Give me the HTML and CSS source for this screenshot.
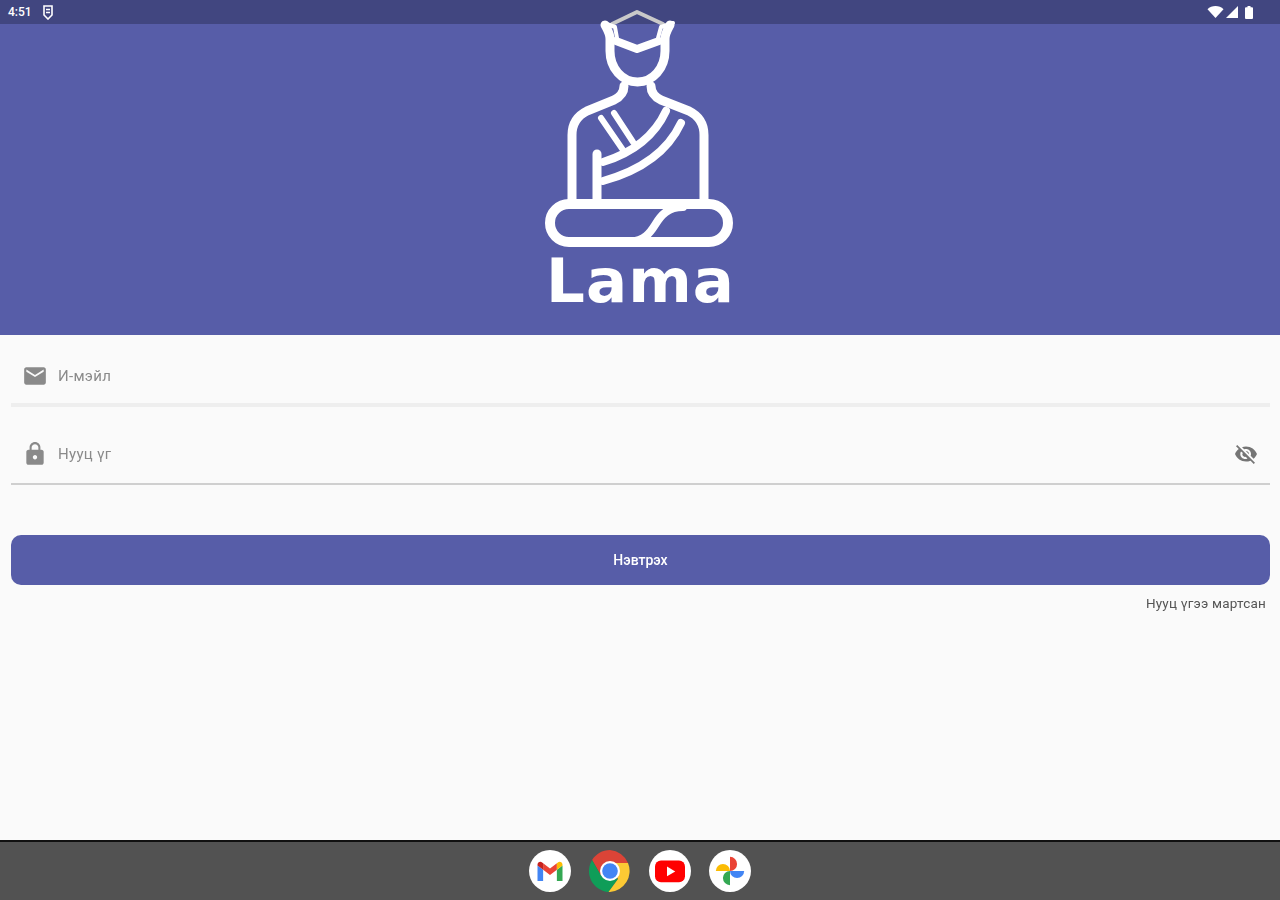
FILE: index.html
```html
<!DOCTYPE html>
<html lang="mn">
<head>
    <meta charset="UTF-8">
    <meta name="viewport" content="width=device-width, initial-scale=1.0">
    <title>Lama</title>
    <link rel="stylesheet" href="styles.css">
</head>
<body>
    <div class="screen">
        <div class="status-bar">
            <div class="status-left">
                <span class="time">4:51</span>
                <svg class="status-sim" viewBox="0 0 10 15" width="10" height="15">
                    <path fill="none" stroke="#fff" stroke-width="1.6" d="M1 1h8v9l-4 4-4-4z"/>
                    <path fill="none" stroke="#fff" stroke-width="1.400" d="M3 4.500h4M3 7.500h4"/>
                </svg>
            </div>
            <div class="status-right">
                <svg viewBox="0 0 16 12" width="17" height="12"><path fill="#fff" d="M0 3.200C2 1.200 5 0 8 0s6 1.200 8 3.200L8 12z"/></svg>
                <svg viewBox="0 0 12 12" width="12" height="12"><path fill="#fff" d="M12 0v12H0z"/></svg>
                <svg class="status-battery" viewBox="0 0 8 13" width="8" height="13"><path fill="#fff" d="M2.500 0h3v1.200H7a1 1 0 0 1 1 1V12a1 1 0 0 1-1 1H1a1 1 0 0 1-1-1V2.200a1 1 0 0 1 1-1h1.500z"/></svg>
            </div>
        </div>

        <header class="banner"></header>

        <!-- logo runs over the status bar -->
        <div class="logo">
            <svg class="logo-mark" viewBox="0 0 240 255" width="240" height="255">
                <g fill="none" stroke="#fff" stroke-linecap="round" stroke-linejoin="round">
                    <path class="cap-top" stroke-width="4" d="M92 24 117 12 143 24"/>
                    <path stroke-width="4" d="M84 23 95 27 97 38M153 23 141 27 138 38"/>
                    <path stroke-width="8" d="M96 41 117 49 139 41"/>
                    <path stroke-width="9" d="M85 25c2 4 5 8 5 14v12c0 17 12 31 27.500 31S145 68 145 51V39c0-6 3-10 5-14"/>
                    <path stroke-width="9" d="M104 86c0 7-4 11-10 14l-27 11c-10 5-15 13-15 24v66M131 86c0 7 4 11 10 14l28 11c10 5 15 13 15 24v66"/>
                    <path stroke-width="6" d="M81 118l22 32M94 113l19 29"/>
                    <path stroke-width="8" d="M146 111c-12 26-34 42-63 51M161 123c-14 30-42 48-78 58"/>
                    <path stroke-width="9" d="M77 154v48"/>
                    <rect stroke-width="10" x="30" y="204" width="178" height="38" rx="19"/>
                    <path stroke-width="8" d="M163 207c-15 0-22 8-28 18-5 8-10 15-25 17"/>
                </g>
            </svg>
            <div class="logo-name">Lama</div>
        </div>

        <main class="form">
            <div class="field field-email">
                <svg class="field-icon" viewBox="0 0 24 24" width="26" height="26"><path d="M20 4H4c-1.100 0-2 .9-2 2v12c0 1.100.9 2 2 2h16c1.100 0 2-.9 2-2V6c0-1.100-.9-2-2-2zm0 4-8 5-8-5V6l8 5 8-5v2z"/></svg>
                <span class="field-label">И-мэйл</span>
            </div>
            <div class="field field-password">
                <svg class="field-icon" viewBox="0 0 24 24" width="26" height="26"><path d="M18 8h-1V6c0-2.760-2.240-5-5-5S7 3.240 7 6v2H6c-1.100 0-2 .9-2 2v10c0 1.100.9 2 2 2h12c1.100 0 2-.9 2-2V10c0-1.100-.9-2-2-2zm-6 9c-1.100 0-2-.9-2-2s.9-2 2-2 2 .9 2 2-.9 2-2 2zm3.100-9H8.900V6c0-1.710 1.390-3.100 3.100-3.100s3.100 1.390 3.100 3.100v2z"/></svg>
                <span class="field-label">Нууц үг</span>
                <svg class="eye-icon" viewBox="0 0 24 24" width="24" height="24"><path d="M12 7c2.760 0 5 2.240 5 5 0 .65-.13 1.260-.36 1.830l2.920 2.920c1.510-1.260 2.700-2.890 3.430-4.750-1.730-4.390-6-7.500-11-7.500-1.400 0-2.740.25-3.980.7l2.160 2.160C10.740 7.130 11.350 7 12 7zM2 4.270l2.280 2.280.46.460C3.080 8.300 1.780 10.020 1 12c1.730 4.390 6 7.500 11 7.500 1.550 0 3.030-.3 4.380-.84l.42.420L19.730 22 21 20.730 3.270 3 2 4.270zM7.530 9.800l1.550 1.550c-.05.21-.8.430-.8.650 0 1.660 1.340 3 3 3 .22 0 .44-.3.650-.08l1.550 1.550c-.67.330-1.410.53-2.200.53-2.760 0-5-2.240-5-5 0-.79.200-1.530.53-2.200zm4.310-.78 3.150 3.150.02-.16c0-1.660-1.340-3-3-3l-.17.010z"/></svg>
            </div>
            <button class="login-button">Нэвтрэх</button>
            <a class="forgot-link">Нууц үгээ мартсан</a>
        </main>

        <footer class="dock">
            <div class="dock-app">
                <svg viewBox="0 0 24 24" width="30" height="30">
                    <path fill="#4285f4" d="M2 20h4.500V11L2 7.500z"/>
                    <path fill="#34a853" d="M17.500 20H22V7.500L17.500 11z"/>
                    <path fill="#ea4335" d="M6.500 5.800 12 10l5.500-4.200V11L12 15.200 6.500 11z"/>
                    <path fill="#fbbc04" d="M17.500 5.800 18.300 5.200C19.800 4 22 5 22 7v.5L17.500 11z"/>
                    <path fill="#c5221f" d="M2 7.500V7C2 5 4.200 4 5.700 5.200l.8.600V11z"/>
                </svg>
            </div>
            <div class="dock-app dock-chrome">
                <svg viewBox="0 0 42 42" width="42" height="42">
                    <path fill="#db4437" d="M21 0C13.400 0 6.800 4 3.100 10l8.900 15.500L21 13h18A21 21 0 0 0 21 0z"/>
                    <path fill="#0f9d58" d="M3.100 10A21 21 0 0 0 19.500 42l9.500-13-17-3.500z"/>
                    <path fill="#fcc934" d="M39 13H21l8 16-9.500 13H21A21 21 0 0 0 39 13z"/>
                    <circle cx="21" cy="21" r="10" fill="#fff"/>
                    <circle cx="21" cy="21" r="7.800" fill="#4285f4"/>
                </svg>
            </div>
            <div class="dock-app">
                <svg viewBox="0 0 24 24" width="36" height="36">
                    <rect x="2" y="5" width="20" height="14.500" rx="4" fill="#f00"/>
                    <path fill="#fff" d="M10 9v6.500l5.500-3.250z"/>
                </svg>
            </div>
            <div class="dock-app">
                <svg viewBox="0 0 24 24" width="34" height="34">
                    <path fill="#fbbc04" d="M12 12H2a5 5 0 0 1 10 0z"/>
                    <path fill="#ea4335" d="M12 12V2a5 5 0 0 1 0 10z"/>
                    <path fill="#4285f4" d="M12 12h10a5 5 0 0 1-10 0z"/>
                    <path fill="#34a853" d="M12 12v10a5 5 0 0 1 0-10z"/>
                </svg>
            </div>
        </footer>
    </div>
</body>
</html>
```

FILE: styles.css
```css
* {
    box-sizing: border-box;
}

body {
    margin: 0;
    font-family: Roboto, "Liberation Sans", sans-serif;
    background-color: #fafafa;
}

/* the reference is a soft, upscaled capture */
.screen {
    position: relative;
    width: 1280px;
    height: 900px;
    display: flex;
    flex-direction: column;
    overflow: hidden;
    filter: blur(0.5px);
}

.status-bar {
    height: 24px;
    padding: 0 27px 0 8px;
    background-color: #414680;
    display: flex;
    justify-content: space-between;
    align-items: center;
    color: #fff;
}

.status-left {
    display: flex;
    align-items: center;
    gap: 11px;
}

.time {
    font-size: 12px;
    font-weight: 500;
}

.status-right {
    display: flex;
    align-items: center;
    gap: 2px;
}

.status-battery {
    margin-left: 5px;
}

.banner {
    height: 311px;
    background-color: #575da8;
}

.logo {
    position: absolute;
    top: 0;
    left: 520px;
    width: 240px;
}

.logo-mark {
    display: block;
}

.cap-top {
    stroke: #c9c9c9;
}

.logo-name {
    margin-top: -9px;
    padding-left: 1px;
    font-family: "DejaVu Sans", sans-serif;
    font-size: 61px;
    line-height: 70px;
    font-weight: 700;
    letter-spacing: 1px;
    text-align: center;
    color: #fff;
}

.form {
    flex: 1;
    display: flex;
    flex-direction: column;
    padding: 0 10px 0 11px;
}

.field {
    display: flex;
    align-items: center;
    color: #8a8a8a;
}

.field svg {
    fill: #8a8a8a;
}

.field-email {
    height: 72px;
    padding-top: 13px;
    border-bottom: 4px solid #eeeeee;
}

.field-password {
    height: 78px;
    padding-top: 18px;
    border-bottom: 2px solid #cfcfcf;
}

.field-icon {
    margin-left: 11px;
    flex-shrink: 0;
}

.field-label {
    margin-left: 10px;
    font-size: 15px;
    letter-spacing: 0.3px;
}

.eye-icon {
    margin-left: auto;
    margin-right: 12px;
}

.field-password .eye-icon {
    fill: #757575;
}

.login-button {
    height: 50px;
    margin-top: 50px;
    border: none;
    border-radius: 10px;
    background-color: #575da8;
    color: #fff;
    font-family: inherit;
    font-size: 14px;
    font-weight: 500;
}

.forgot-link {
    align-self: flex-end;
    margin: 10px 4px 0 0;
    font-size: 13.500px;
    line-height: 16px;
    letter-spacing: 0.2px;
    color: #555;
}

.dock {
    height: 60px;
    border-top: 2px solid #111;
    background-color: #525252;
    display: flex;
    justify-content: center;
    align-items: center;
    gap: 18px;
}

.dock-app {
    width: 42px;
    height: 42px;
    border-radius: 50%;
    background-color: #fff;
    display: flex;
    justify-content: center;
    align-items: center;
}

.dock-chrome {
    background-color: transparent;
}
```
